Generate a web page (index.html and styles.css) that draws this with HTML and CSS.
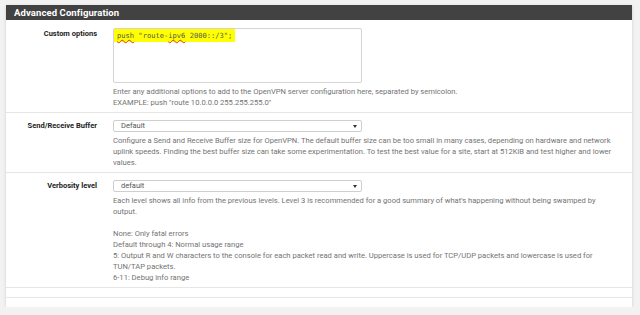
FILE: index.html
```html
<!DOCTYPE html>
<html lang="en">

<head>
    <meta charset="UTF-8">
    <title>Advanced Configuration</title>
    <link rel="stylesheet" href="styles.css">
</head>

<body>
    <div class="panel">
        <div class="panel-heading">Advanced Configuration</div>

        <div class="form-row">
            <label class="row-label">Custom options</label>
            <div class="row-field">
                <div class="textarea"><span class="mark"><span class="spell">push</span> "route-<span class="spell">ipv6</span> 2000::/3";</span></div>
                <div class="help">Enter any additional options to add to the OpenVPN server configuration here, separated by semicolon.<br>EXAMPLE: push "route 10.0.0.0 255.255.255.0"</div>
            </div>
        </div>

        <div class="form-row">
            <label class="row-label">Send/Receive Buffer</label>
            <div class="row-field">
                <div class="select">Default<span class="caret"></span></div>
                <div class="help">Configure a Send and Receive Buffer size for OpenVPN. The default buffer size can be too small in many cases, depending on hardware and network uplink speeds. Finding the best buffer size can take some experimentation. To test the best value for a site, start at 512KiB and test higher and lower values.</div>
            </div>
        </div>

        <div class="form-row">
            <label class="row-label">Verbosity level</label>
            <div class="row-field">
                <div class="select">default<span class="caret"></span></div>
                <div class="help">Each level shows all info from the previous levels. Level 3 is recommended for a good summary of what's happening without being swamped by output.<br><br>None: Only fatal errors<br>Default through 4: Normal usage range<br>5: Output R and W characters to the console for each packet read and write. Uppercase is used for TCP/UDP packets and lowercase is used for TUN/TAP packets.<br>6-11: Debug info range</div>
            </div>
        </div>

        <div class="empty-row"></div>
        <div class="empty-row"></div>
    </div>
</body>

</html>
```

FILE: styles.css
```css
/* CSS styles */
body {
    font-family: Roboto, 'Liberation Sans', sans-serif;
    background-color: #f2f2f2;
    margin: 0;
    padding: 5px 8px 0 6px;
}

.panel {
    background-color: #ffffff;
    box-shadow: 0 1px 3px rgba(0, 0, 0, 0.15);
}

.panel-heading {
    background-color: #424242;
    color: #ffffff;
    font-weight: bold;
    font-size: 9.5px;
    height: 15px;
    line-height: 15px;
    padding-left: 8px;
    letter-spacing: 0.1px;
}

.form-row {
    display: grid;
    grid-template-columns: 91px 1fr;
    column-gap: 16px;
    padding: 7px 12px 4px 0;
    border-top: 1px solid #e6e6e6;
}

.panel-heading + .form-row {
    border-top: none;
    padding-top: 8px;
}

.row-label {
    text-align: right;
    font-weight: bold;
    font-size: 7.5px;
    line-height: 11px;
    color: #222;
}

.textarea {
    width: 247px;
    height: 53px;
    border: 1px solid #d4d4d4;
    border-radius: 2px;
}

.mark {
    display: block;
    width: fit-content;
    white-space: nowrap;
    background-color: #ffff00;
    font-family: 'DejaVu Sans Mono', monospace;
    font-size: 7.1px;
    line-height: 13px;
    color: #555;
    padding: 0 3px 0 3px;
}

.spell {
    text-decoration: underline wavy #e03030;
    text-decoration-thickness: 0.5px;
}

.select {
    position: relative;
    width: 240px;
    height: 10px;
    line-height: 10px;
    border: 1px solid #cfcfcf;
    border-radius: 2px;
    padding-left: 7px;
    font-size: 7.5px;
    color: #555;
}

.caret {
    position: absolute;
    right: 4px;
    top: 4px;
    border-left: 2px solid transparent;
    border-right: 2px solid transparent;
    border-top: 3px solid #333;
}

.help {
    margin-top: 3px;
    font-size: 7.6px;
    line-height: 11px;
    color: #737373;
}

.empty-row {
    height: 9px;
    border-top: 1px solid #e6e6e6;
}
```
